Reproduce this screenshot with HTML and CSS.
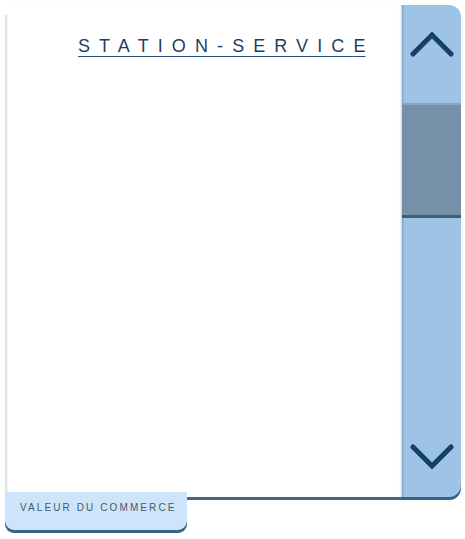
FILE: index.html
```html
<!DOCTYPE html>
<html>
<head>
<meta charset="utf-8">
<link rel="stylesheet" href="styles.css">
</head>
<body>
<div class="frame">
  <div class="main">
    <div class="panel">
      <h1 class="title">STATION-SERVIC<span class="last">E</span></h1>
    </div>
    <div class="scrollbar">
      <div class="btn up">
        <svg width="44" height="26" viewBox="0 0 44 26"><polyline points="3,23 22,4 41,23" fill="none" stroke="#173f63" stroke-width="5" stroke-linecap="round" stroke-linejoin="miter"/></svg>
      </div>
      <div class="thumb"></div>
      <div class="track"></div>
      <div class="btn down">
        <svg width="44" height="26" viewBox="0 0 44 26"><polyline points="3,3 22,22 41,3" fill="none" stroke="#173f63" stroke-width="5" stroke-linecap="round" stroke-linejoin="miter"/></svg>
      </div>
    </div>
  </div>
  <div class="tab">VALEUR DU COMMERCE</div>
</div>
</body>
</html>
```
FILE: styles.css
```css
html, body {
  margin: 0;
  padding: 0;
  background: #ffffff;
}
.frame {
  padding: 5px 0 6px 5px;
  width: 456px;
}
.main {
  display: flex;
  height: 495px;
}
.panel {
  width: 397px;
  height: 495px;
  box-sizing: border-box;
  background: linear-gradient(to right, #d3dde8 0, #e6edf4 2px, #ffffff 3px) no-repeat 0 10px / 3px 480px, #ffffff;
  border-bottom: 3px solid #3f6789;
  box-shadow: inset -2px 0 2px -1px #c9ced3;
}
.title {
  display: inline-block;
  margin: 0;
  padding: 31px 0 0 73px;
  font-family: "Liberation Sans", Arial, sans-serif;
  font-weight: normal;
  font-size: 18px;
  letter-spacing: 9.1px;
  color: #1c3e63;
  line-height: 20px;
  text-decoration: underline;
  text-decoration-thickness: 1px;
  text-underline-offset: 4px;
  text-decoration-color: #2a4e74;
}
.title .last {
  letter-spacing: 0;
}
.scrollbar {
  width: 59px;
  height: 495px;
  display: flex;
  flex-direction: column;
  background: #9dc3e5;
  border-radius: 0 12px 12px 0;
  box-shadow: inset 0 -3px 0 #35628a, inset 2px 0 2px -1px #7f9fbd;
  overflow: hidden;
}
.btn {
  display: flex;
  justify-content: center;
  align-items: flex-start;
}
.btn.up {
  height: 98px;
  box-sizing: border-box;
  padding-top: 26px;
}
.thumb {
  height: 115px;
  background: #7590a8;
  box-shadow: inset 0 -3px 0 #4a5d6e, inset 0 2px 0 #8aa4bb;
}
.track {
  flex: 1;
}
.btn.down {
  height: 56px;
}
.tab {
  position: relative;
  margin-top: -8px;
  width: 182px;
  height: 41px;
  box-sizing: border-box;
  background: #cde4fa;
  border-radius: 0 0 9px 9px;
  box-shadow: inset 0 -3px 0 #37618a;
  font-family: "Liberation Sans", Arial, sans-serif;
  font-size: 10px;
  letter-spacing: 2.1px;
  color: #4c5866;
  padding: 10px 0 0 15px;
}
```
